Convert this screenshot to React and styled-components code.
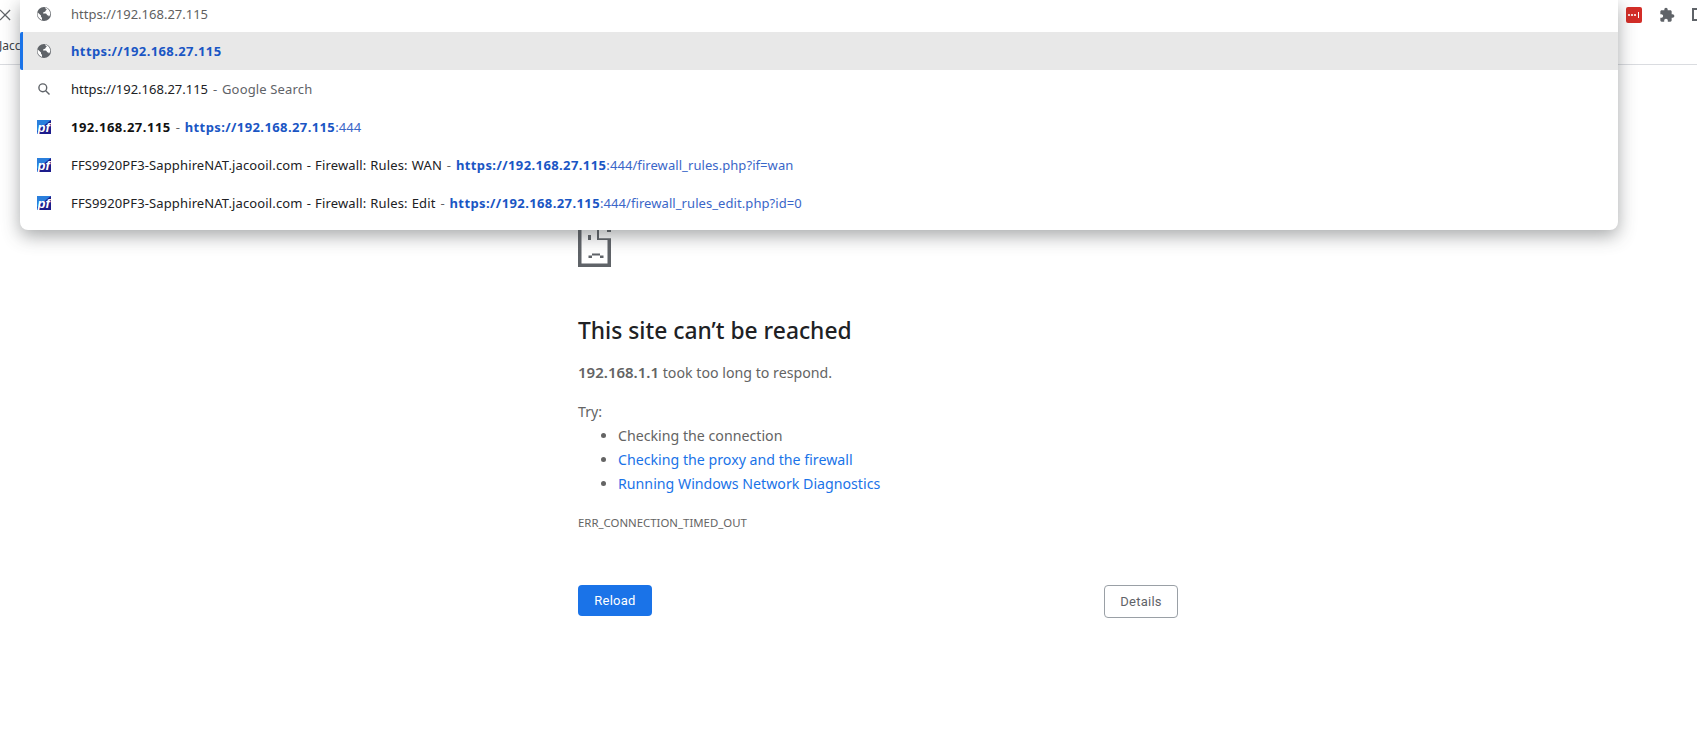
import styled, { createGlobalStyle } from "styled-components";

const Global = createGlobalStyle`
  html, body { margin: 0; padding: 0; background: #fff; overflow: hidden; }
  body { font-family: "Noto Sans", "Liberation Sans", sans-serif; }
`;

const rows = [
  { id: 1, icon: "search", parts: [["plain", "https://192.168.27.115"], ["dash", " - "], ["muted", "Google Search"]] },
  { id: 2, icon: "pf", parts: [["strong", "192.168.27.115"], ["dash", " - "], ["match", "https://192.168.27.115"], ["url", ":444"]] },
  { id: 3, icon: "pf", parts: [["title", "FFS9920PF3-SapphireNAT.jacooil.com - Firewall: Rules: WAN"], ["dash", " - "], ["match", "https://192.168.27.115"], ["url", ":444/firewall_rules.php?if=wan"]] },
  { id: 4, icon: "pf", parts: [["title", "FFS9920PF3-SapphireNAT.jacooil.com - Firewall: Rules: Edit"], ["dash", " - "], ["match", "https://192.168.27.115"], ["url", ":444/firewall_rules_edit.php?id=0"]] },
];

function Globe() {
  return (
    <svg width="16" height="16" viewBox="0 0 16 16">
      <circle cx="8" cy="8" r="7" fill="#5f6368" />
      <path d="M9 1.600c.2 1 .9 1.300 1.600 1.500.2.900-.5 1.300-1 1.600-.3 1-1 1.400-2 1.400L7 7.400l2.600.2c1 .2 1.300.8 1.300 1.600h1c.7.2 1 1 1 1.600 1-1.300 1.400-2.400 1.400-3C14.300 5 12 2.300 9 1.600z" fill="#fff" />
      <path d="M1.800 6.500 5 9.500v1c0 .6.5 1 1 1.100v2.300c-2.500-.7-4.500-3-4.500-5.900 0-.5.100-1 .3-1.500z" fill="#fff" />
    </svg>
  );
}

function SearchIcon() {
  return (
    <svg width="16" height="16" viewBox="0 0 16 16" fill="none" stroke="#5f6368" strokeWidth="1.400">
      <circle cx="6.800" cy="6.800" r="3.900" />
      <path d="M9.700 9.700 13.500 13.500" />
    </svg>
  );
}

function PfIcon() {
  return (
    <svg width="16" height="16" viewBox="0 0 16 16">
      <path d="M1 1h14v14H1z" fill="#1c1c8c" />
      <path d="M1 1h14L1 12z" fill="#2a7fdc" />
      <text x="1.500" y="12.800" fontFamily="Liberation Sans, sans-serif" fontSize="13" fontWeight="700" fontStyle="italic" fill="#fff">pf</text>
    </svg>
  );
}

function SadPage() {
  return (
    <svg width="33" height="42" viewBox="0 0 33 42" fill="#5f6368">
      <path d="M0 0h3.500v38.500h26V15H19V0h2v13.300h12V42H0z" />
      <path d="M29 5h4v2h-4z" />
      <path d="M10 10h3v5h-3z" />
      <path d="M14 28.500h8v2h-8zM10.500 30.500H14V33h-3.500zM22 30.500h3.500V33H22z" />
    </svg>
  );
}

function PuzzleIcon() {
  return (
    <svg width="16" height="16" viewBox="0 0 24 24" fill="#5f6368">
      <path d="M20.500 11H19V7c0-1.100-.9-2-2-2h-4V3.500C13 2.120 11.880 1 10.500 1S8 2.120 8 3.500V5H4c-1.100 0-1.990.9-1.990 2v3.800H3.500c1.490 0 2.700 1.210 2.700 2.700s-1.210 2.700-2.700 2.700H2V20c0 1.100.9 2 2 2h3.800v-1.500c0-1.490 1.210-2.700 2.700-2.700 1.490 0 2.700 1.210 2.700 2.700V22H17c1.100 0 2-.9 2-2v-4h1.500c1.380 0 2.500-1.120 2.500-2.500S21.880 11 20.500 11z" />
    </svg>
  );
}

function PassIcon() {
  return (
    <svg width="16" height="16" viewBox="0 0 16 16">
      <rect width="16" height="16" rx="2" fill="#d32d27" />
      <circle cx="3" cy="8" r="1.100" fill="#fff" />
      <circle cx="6" cy="8" r="1.100" fill="#fff" />
      <circle cx="9" cy="8" r="1.100" fill="#fff" />
      <path d="M12.500 5v6" stroke="#fff" />
    </svg>
  );
}

export default function App() {
  return (
    <Page>
      <Global />
      <Toolbar>
        <CloseRow>
          <CloseIcon viewBox="0 0 12 12">
            <path d="M0 0.500 11 11.500M11 0.500 0 11.500" />
          </CloseIcon>
          <ToolIcons>
            <PassIcon />
            <PuzzleIcon />
            <ProfileEdge />
          </ToolIcons>
        </CloseRow>
        <BookmarkRow>Jacc</BookmarkRow>
      </Toolbar>

      <Omnibox>
        <InputRow>
          <IconSlot><Globe /></IconSlot>
          <InputText>https://192.168.27.115</InputText>
        </InputRow>
        <SuggestRow $selected>
          <IconSlot><Globe /></IconSlot>
          <RowText><Part $kind="match">https://192.168.27.115</Part></RowText>
        </SuggestRow>
        {rows.map((row) => (
          <SuggestRow key={row.id}>
            <IconSlot>{row.icon === "pf" ? <PfIcon /> : <SearchIcon />}</IconSlot>
            <RowText>
              {row.parts.map(([kind, text], i) => (
                <Part key={i} $kind={kind}>{text}</Part>
              ))}
            </RowText>
          </SuggestRow>
        ))}
      </Omnibox>

      <ErrorBody>
        <SadPage />
        <Heading>This site can’t be reached</Heading>
        <Summary><b>192.168.1.1</b> took too long to respond.</Summary>
        <TryLabel>Try:</TryLabel>
        <TryList>
          <li>Checking the connection</li>
          <li><a>Checking the proxy and the firewall</a></li>
          <li><a>Running Windows Network Diagnostics</a></li>
        </TryList>
        <ErrorCode>ERR_CONNECTION_TIMED_OUT</ErrorCode>
        <Buttons>
          <Reload>Reload</Reload>
          <Details>Details</Details>
        </Buttons>
      </ErrorBody>
    </Page>
  );
}

const Page = styled.div`
  width: 1697px;
  height: 749px;
  background: #fff;
  overflow: hidden;
`;

const Toolbar = styled.div`
  height: 64px;
  border-bottom: 1px solid #dadce0;
`;

const CloseRow = styled.div`
  height: 29px;
  display: flex;
  align-items: center;
  justify-content: space-between;
`;

const CloseIcon = styled.svg`
  width: 11px;
  height: 12px;
  fill: none;
  stroke: #5f6368;
  stroke-width: 1.4;
  margin-top: 1px;
`;

const ToolIcons = styled.div`
  display: flex;
  align-items: center;
  gap: 17px;
  margin-right: -9px;
  svg { display: block; }
`;

const ProfileEdge = styled.div`
  width: 14px;
  height: 13px;
  border: 2px solid #5f6368;
  box-sizing: border-box;
`;

const BookmarkRow = styled.div`
  margin: 9px 0 0 -1px;
  font-size: 12px;
  line-height: 16px;
  color: #3c4043;
`;

const Omnibox = styled.div`
  position: absolute;
  left: 20px;
  top: 0;
  width: 1598px;
  height: 230px;
  background: #fff;
  border-radius: 0 0 8px 8px;
  box-shadow: 0 6px 18px rgba(60, 64, 67, 0.45);
`;

const InputRow = styled.div`
  height: 32px;
  display: flex;
  align-items: center;
  padding: 0 0 4px 3px;
  box-sizing: border-box;
`;

const IconSlot = styled.div`
  width: 41px;
  margin-right: 7px;
  display: flex;
  justify-content: center;
  flex: none;
  svg { display: block; }
`;

const InputText = styled.div`
  font-size: 13px;
  color: #5f5f5f;
`;

const SuggestRow = styled.div`
  height: 38px;
  display: flex;
  align-items: center;
  background: ${(p) => (p.$selected ? "#e8e8e8" : "transparent")};
  border-left: 3px solid ${(p) => (p.$selected ? "#1a73e8" : "transparent")};
  border-radius: ${(p) => (p.$selected ? "2px 0 0 2px" : "0")};
`;

const RowText = styled.div`
  font-size: 13px;
  white-space: pre;
  color: #202124;
`;

const partStyles = {
  plain: "color: #202124;",
  title: "color: #202124; letter-spacing: 0.13px; word-spacing: 0.6px;",
  dash: "color: #5f6368; word-spacing: 1.5px;",
  muted: "color: #5f6368; letter-spacing: 0.15px;",
  strong: "color: #111; font-weight: 700; letter-spacing: 0.5px;",
  match: "color: #1a56c4; font-weight: 700; letter-spacing: 0.4px;",
  url: "color: #3a66c8; letter-spacing: 0.07px;",
};

const Part = styled.span`
  ${(p) => partStyles[p.$kind]}
`;

const ErrorBody = styled.div`
  margin-left: 578px;
  width: 600px;
  padding-top: 160px;
  color: #646464;
  font-size: 14.2px;
  svg { display: block; }
`;

const Heading = styled.h1`
  margin: 48px 0 0;
  font-size: 22.8px;
  line-height: 32px;
  font-weight: 500;
  color: #202124;
`;

const Summary = styled.p`
  margin: 13px 0 0;
  line-height: 24px;
  b { font-size: 15px; font-weight: 600; }
`;

const TryLabel = styled.p`
  margin: 15px 0 0;
  line-height: 24px;
`;

const TryList = styled.ul`
  margin: 0;
  padding-left: 40px;
  line-height: 24px;
  a { color: #1a73e8; }
`;

const ErrorCode = styled.div`
  margin-top: 19px;
  font-size: 11.4px;
  line-height: 16px;
  text-transform: uppercase;
`;

const Buttons = styled.div`
  display: flex;
  justify-content: space-between;
  align-items: flex-start;
  margin-top: 54px;
`;

const Reload = styled.button`
  width: 74px;
  height: 31px;
  border: 0;
  border-radius: 4px;
  background: #1a73e8;
  color: #fff;
  font: 400 13px Roboto, sans-serif;
  letter-spacing: 0.25px;
`;

const Details = styled.button`
  width: 74px;
  height: 33px;
  border: 1px solid #9aa0a6;
  border-radius: 4px;
  background: #fff;
  color: #5f6368;
  font: 400 13px Roboto, sans-serif;
  letter-spacing: 0.25px;
`;
